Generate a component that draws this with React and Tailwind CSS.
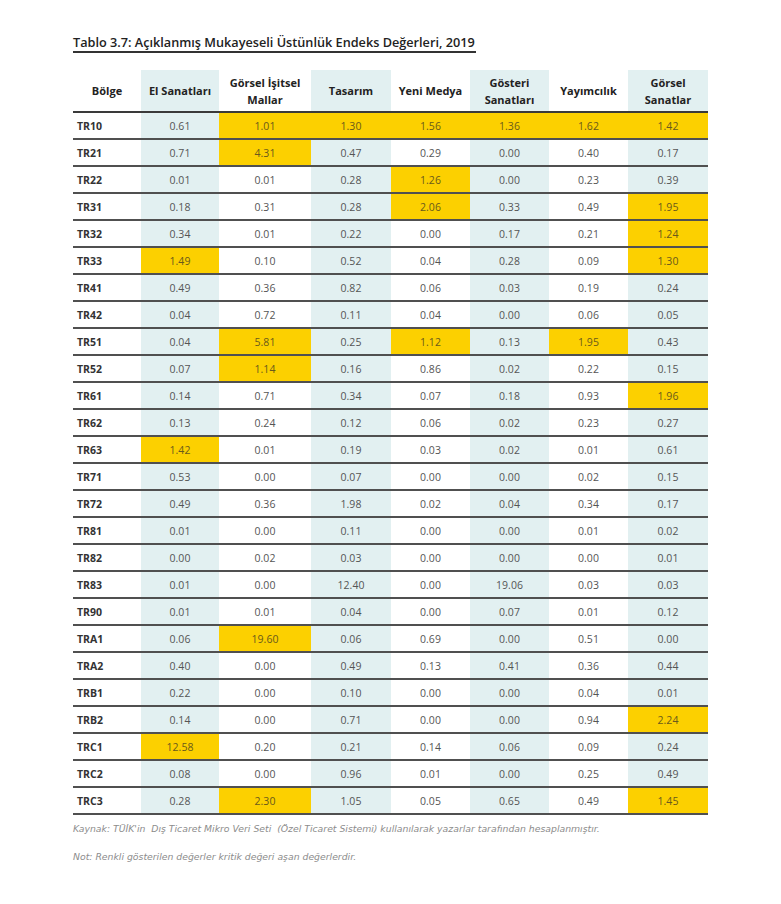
import React from 'react';

const columns = [
    { label: 'Bölge', blue: false },
    { label: 'El Sanatları', blue: true },
    { label: 'Görsel İşitsel\nMallar', blue: false },
    { label: 'Tasarım', blue: true },
    { label: 'Yeni Medya', blue: false },
    { label: 'Gösteri\nSanatları', blue: true },
    { label: 'Yayımcılık', blue: false },
    { label: 'Görsel\nSanatlar', blue: true },
];

// "*" marks a value above the critical value (yellow cell)
const rows = [
    ['TR10', '0.61', '1.01*', '1.30*', '1.56*', '1.36*', '1.62*', '1.42*'],
    ['TR21', '0.71', '4.31*', '0.47', '0.29', '0.00', '0.40', '0.17'],
    ['TR22', '0.01', '0.01', '0.28', '1.26*', '0.00', '0.23', '0.39'],
    ['TR31', '0.18', '0.31', '0.28', '2.06*', '0.33', '0.49', '1.95*'],
    ['TR32', '0.34', '0.01', '0.22', '0.00', '0.17', '0.21', '1.24*'],
    ['TR33', '1.49*', '0.10', '0.52', '0.04', '0.28', '0.09', '1.30*'],
    ['TR41', '0.49', '0.36', '0.82', '0.06', '0.03', '0.19', '0.24'],
    ['TR42', '0.04', '0.72', '0.11', '0.04', '0.00', '0.06', '0.05'],
    ['TR51', '0.04', '5.81*', '0.25', '1.12*', '0.13', '1.95*', '0.43'],
    ['TR52', '0.07', '1.14*', '0.16', '0.86', '0.02', '0.22', '0.15'],
    ['TR61', '0.14', '0.71', '0.34', '0.07', '0.18', '0.93', '1.96*'],
    ['TR62', '0.13', '0.24', '0.12', '0.06', '0.02', '0.23', '0.27'],
    ['TR63', '1.42*', '0.01', '0.19', '0.03', '0.02', '0.01', '0.61'],
    ['TR71', '0.53', '0.00', '0.07', '0.00', '0.00', '0.02', '0.15'],
    ['TR72', '0.49', '0.36', '1.98', '0.02', '0.04', '0.34', '0.17'],
    ['TR81', '0.01', '0.00', '0.11', '0.00', '0.00', '0.01', '0.02'],
    ['TR82', '0.00', '0.02', '0.03', '0.00', '0.00', '0.00', '0.01'],
    ['TR83', '0.01', '0.00', '12.40', '0.00', '19.06', '0.03', '0.03'],
    ['TR90', '0.01', '0.01', '0.04', '0.00', '0.07', '0.01', '0.12'],
    ['TRA1', '0.06', '19.60*', '0.06', '0.69', '0.00', '0.51', '0.00'],
    ['TRA2', '0.40', '0.00', '0.49', '0.13', '0.41', '0.36', '0.44'],
    ['TRB1', '0.22', '0.00', '0.10', '0.00', '0.00', '0.04', '0.01'],
    ['TRB2', '0.14', '0.00', '0.71', '0.00', '0.00', '0.94', '2.24*'],
    ['TRC1', '12.58*', '0.20', '0.21', '0.14', '0.06', '0.09', '0.24'],
    ['TRC2', '0.08', '0.00', '0.96', '0.01', '0.00', '0.25', '0.49'],
    ['TRC3', '0.28', '2.30*', '1.05', '0.05', '0.65', '0.49', '1.45*'],
];

const grid = 'grid grid-cols-[68px_78px_92px_80px_79px_79px_79px_80px]';

function Cell({ value, blue }) {
    const hot = value.endsWith('*');
    const bg = hot ? 'bg-[#fcd000]' : blue ? 'bg-[#e2f0f1]' : 'bg-white';
    return (
        <div className={`${bg} flex items-center justify-center h-[25px] pt-[2px] text-[10.5px] ${hot ? 'text-[#6a5a1c]' : 'text-[#555]'}`}>
            {hot ? value.slice(0, -1) : value}
        </div>
    );
}

export default function App() {
    return (
        <div className="min-h-screen bg-white pl-[73px] pt-[34px] pb-10 font-['Open_Sans',sans-serif]">
            <div className="w-[403px] border-b-2 border-[#333] pb-[1px]">
                <h1 className="text-[12.7px] font-semibold text-[#222] leading-[16px] whitespace-nowrap">
                    Tablo 3.7: Açıklanmış Mukayeseli Üstünlük Endeks Değerleri, 2019
                </h1>
            </div>

            <div className="mt-[17px] w-[635px]">
                <div className={`${grid} border-b-2 border-[#3a3a3a]`}>
                    {columns.map((c) => (
                        <div
                            key={c.label}
                            className={`${c.blue ? 'bg-[#e2f0f1]' : 'bg-white'} h-[41px] flex items-center justify-center text-center whitespace-pre-line text-[11px] font-bold leading-[17px] text-[#222]`}
                        >
                            {c.label}
                        </div>
                    ))}
                </div>

                {rows.map((r) => (
                    <div key={r[0]} className={`${grid} border-b-2 border-[#505050]`}>
                        <div className="h-[25px] pt-[2px] flex items-center pl-[4px] text-[10.5px] font-bold text-[#333]">{r[0]}</div>
                        {r.slice(1).map((v, i) => (
                            <Cell key={i} value={v} blue={columns[i + 1].blue} />
                        ))}
                    </div>
                ))}
            </div>

            <p className="mt-[7px] text-[9.3px] italic text-[#8c8c8c] whitespace-pre font-['DejaVu_Sans',sans-serif]">
                Kaynak: TÜİK'in  Dış Ticaret Mikro Veri Seti  (Özel Ticaret Sistemi) kullanılarak yazarlar tarafından hesaplanmıştır.
            </p>
            <p className="mt-[14px] text-[9.3px] italic text-[#8c8c8c] font-['DejaVu_Sans',sans-serif]">
                Not: Renkli gösterilen değerler kritik değeri aşan değerlerdir.
            </p>
        </div>
    );
}
